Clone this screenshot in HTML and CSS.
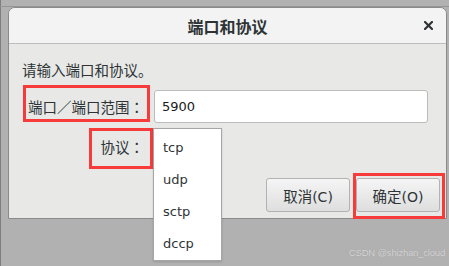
FILE: index.html
```html
<!DOCTYPE html>
<html>
    <head>
        <meta charset="utf-8">
        <link rel="stylesheet" href="styles.css">
    </head>
    <body>
        <div class="screen">
            <div class="strip"></div>
            <div class="dialog">
                <div class="titlebar">
                    <span></span>
                    <h1 class="title">端口和协议</h1>
                    <span class="close">
                        <svg width="9" height="9" viewBox="0 0 9 9">
                            <path d="M1 1L8 8M8 1L1 8" stroke="#2e3436" stroke-width="2.2" stroke-linecap="square"/>
                        </svg>
                    </span>
                </div>
                <div class="content">
                    <p class="prompt">请输入端口和协议。</p>
                    <div class="form">
                        <span class="label">端口／端口范围<span class="colon">：</span></span>
                        <div class="entry">5900</div>
                        <span class="label">协议<span class="colon">：</span></span>
                        <div class="combo"></div>
                    </div>
                    <div class="actions">
                        <button class="btn">取消<span class="latin">(C)</span></button>
                        <button class="btn">确定<span class="latin">(O)</span></button>
                    </div>
                </div>
            </div>
            <div class="mark mark-port"></div>
            <div class="mark mark-proto"></div>
            <ul class="menu">
                <li>tcp</li>
                <li>udp</li>
                <li>sctp</li>
                <li>dccp</li>
            </ul>
            <div class="mark mark-ok"></div>
            <div class="watermark">CSDN @shizhan_cloud</div>
        </div>
    </body>
</html>
```

FILE: styles.css
```css
body{
    margin:0px;
    background:#b1b1b1;
}
.screen{
    position:relative;
    width:449px;
    height:266px;
    background:#b1b1b1;
    box-shadow:inset 1px 0 #7e7e7e;
    overflow:hidden;
    font-family:"Noto Sans CJK SC", sans-serif;
    color:#2e3436;
}
.strip{
    height:6px;
    border-bottom:1px solid #959595;
}
.dialog{
    margin-left:8px;
    width:439px;
    height:212px;
    box-sizing:border-box;
    border:1px solid #8a8a8a;
    border-radius:7px 7px 0 0;
    background:#e8e8e7;
    overflow:hidden;
}
.titlebar{
    display:grid;
    grid-template-columns:1fr auto 1fr;
    align-items:center;
    height:35px;
    background:#f3f3f3;
    border-bottom:1px solid #bdbdbd;
}
.title{
    margin:0px;
    font-size:16px;
    font-weight:bold;
    line-height:20px;
}
.close{
    justify-self:end;
    margin-right:13px;
    height:9px;
}
.close svg{
    display:block;
}
.content{
    padding:16px 6px 0 13px;
}
.prompt{
    margin:0px;
    font-size:14.5px;
    line-height:20px;
}
.form{
    display:grid;
    grid-template-columns:124px 274px;
    grid-template-rows:33px 32px;
    column-gap:8px;
    row-gap:8px;
    margin-top:10px;
}
.label{
    align-self:center;
    text-align:right;
    padding-right:2px;
    font-size:14.5px;
    line-height:20px;
    white-space:nowrap;
}
.colon{
    font-family:"Noto Sans CJK JP", sans-serif;
}
.entry{
    box-sizing:border-box;
    background:white;
    border:1px solid #bcbcbc;
    border-radius:3px;
    padding-left:7px;
    font-family:"DejaVu Sans", sans-serif;
    font-size:13px;
    line-height:31px;
    color:#1a1a1a;
}
.combo{
    width:68px;
    background:white;
}
.actions{
    display:flex;
    justify-content:flex-end;
    gap:6px;
    margin-top:15px;
}
.btn{
    width:84px;
    height:34px;
    border:1px solid #b2b2b2;
    border-radius:3px;
    background:linear-gradient(#f5f5f5, #dedede);
    font-family:"Noto Sans CJK SC", sans-serif;
    font-size:14.5px;
    color:#2e3436;
    padding:0px;
}
.latin{
    font-family:"DejaVu Sans", sans-serif;
    font-size:14px;
}
.menu{
    position:absolute;
    left:153px;
    top:128px;
    width:69px;
    height:133px;
    box-sizing:border-box;
    margin:0px;
    padding:3px 0 0 9px;
    list-style:none;
    background:white;
    border:1px solid #a6a6a6;
    box-shadow:0 1px 2px rgba(0,0,0,0.15);
    font-family:"DejaVu Sans", sans-serif;
    font-size:13px;
    color:#2e3436;
}
.menu li{
    height:32px;
    line-height:32px;
}
.mark{
    position:absolute;
    box-sizing:border-box;
    border:3px solid #f73b3b;
}
.mark-port{
    left:23px;
    top:85px;
    width:127px;
    height:37px;
}
.mark-proto{
    left:89px;
    top:128px;
    width:64px;
    height:41px;
}
.mark-ok{
    left:353px;
    top:173px;
    width:92px;
    height:46px;
}
.watermark{
    position:absolute;
    right:4px;
    top:246px;
    font-family:"Liberation Sans", sans-serif;
    font-size:9.5px;
    letter-spacing:-0.2px;
    line-height:14px;
    color:#d6d6d6;
    text-shadow:0 0 1px rgba(0,0,0,0.15);
}
```
